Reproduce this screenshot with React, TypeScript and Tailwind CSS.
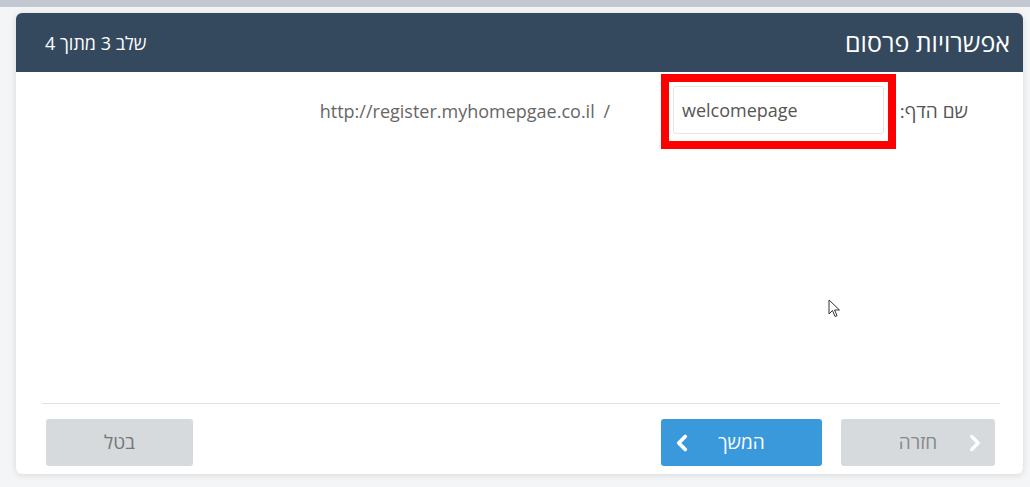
import React from "react";
import { ChevronLeft, ChevronRight } from "lucide-react";

const latin = { fontFamily: '"Open Sans", "Liberation Sans", sans-serif' };
const hebrew = { fontFamily: '"Open Sans", "DejaVu Sans", sans-serif' };

const App: React.FC = () => {
  return (
    <div className="relative w-[1030px] h-[487px] overflow-hidden bg-[#f4f5f7]" style={hebrew}>
      <div className="h-[7px] bg-[#c3c8d0]" />

      {/* modal */}
      <div
        dir="rtl"
        className="ml-[16px] mr-[7px] mt-[6px] h-[461px] flex flex-col rounded-[6px] bg-white shadow-[0_1px_6px_rgba(0,0,0,0.12)]"
      >
        <div className="h-[59px] shrink-0 flex items-center justify-between rounded-t-[6px] bg-[#34495e] pr-[13px] pl-[29px] text-white">
          <h2 className="text-[25px] font-normal leading-none">אפשרויות פרסום</h2>
          <span className="text-[18px] leading-none">שלב 3 מתוך 4</span>
        </div>

        <div className="flex-1 pt-[2px]">
          <div className="flex items-center pr-[55px]">
            <label className="w-[66px] shrink-0 ml-[6px] text-[19px] text-[#555] whitespace-nowrap">שם הדף:</label>
            <div className="border-[8px] border-[#ff0000] p-[4px] pb-[7px]">
              <input
                dir="ltr"
                readOnly
                value="welcomepage"
                style={latin}
                className="w-[211px] h-[48px] rounded-[3px] border border-[#e3e5e8] px-[8px] text-[18px] text-[#555] outline-none"
              />
            </div>
            <span dir="ltr" style={latin} className="mr-[51px] text-[18px] text-[#666]">
              http://register.myhomepgae.co.il <span className="ml-[4px]">/</span>
            </span>
          </div>
        </div>

        <div className="mr-[23px] ml-[26px] border-t border-[#dfe1e4]" />

        <div className="h-[70px] shrink-0 flex items-start pt-[15px] pr-[28px] pl-[30px] text-[19px]">
          <button className="relative w-[154px] h-[47px] rounded-[3px] bg-[#d6dadd] text-[#888] flex items-center justify-center">
            <ChevronRight className="absolute right-[7px] w-[26px] h-[26px] text-white" strokeWidth={3} />
            חזרה
          </button>
          <button className="relative mr-[19px] w-[161px] h-[47px] rounded-[3px] bg-[#3a99db] text-white flex items-center justify-center">
            המשך
            <ChevronLeft className="absolute left-[8px] w-[26px] h-[26px] text-white" strokeWidth={3.5} />
          </button>
          <button className="mr-auto w-[147px] h-[47px] rounded-[3px] bg-[#d6dadd] text-[#777] flex items-center justify-center">
            בטל
          </button>
        </div>
      </div>

      {/* mouse cursor */}
      <svg className="absolute left-[828px] top-[299px]" width="13" height="20" viewBox="0 0 13 20">
        <path
          d="M1 1 L1 15 L4.5 11.5 L7 17.5 L9 16.7 L6.6 11 L11.5 11 Z"
          fill="#fff"
          stroke="#333"
          strokeWidth="1"
          strokeLinejoin="round"
        />
      </svg>
    </div>
  );
};

export default App;
